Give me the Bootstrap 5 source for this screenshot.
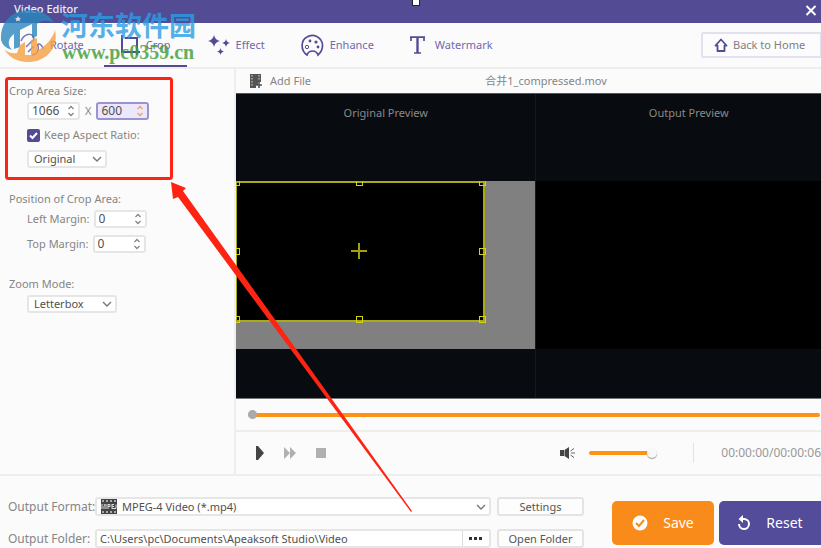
<!DOCTYPE html>
<html lang="en">
<head>
<meta charset="utf-8">
<meta name="viewport" content="width=device-width, initial-scale=1">
<title>Video Editor</title>
<link href="https://cdn.jsdelivr.net/npm/bootstrap@5.3.0/dist/css/bootstrap.min.css" rel="stylesheet">
<style>
  body { font-family: "Noto Sans", "Noto Sans CJK SC", sans-serif; font-size: 11px; line-height: 16px; color: #858585; background: #fbfbfb; overflow-x: hidden; }
  svg { display: block; flex: none; }
  .titlebar { background: #534c95; height: 23px; padding: 0 4px 0 14px; }
  .titlebar h1 { font-size: 11px; line-height: 17px; color: #eeedf6; font-weight: 500; }
  .grip { top: 0; left: 412px; width: 8px; height: 6px; background: #fff; border: 1px solid #222; border-top: 0; }
  .toolbar { height: 46px; border-bottom: 2px solid #eee; padding-left: 4px; }
  .tool-tab { color: #7068b0; text-decoration: none; height: 44px; padding: 2px 16px 0; border-bottom: 2px solid transparent; gap: 6px; }
  .tool-tab.current { border-bottom-color: #534c95; }
  .home-btn { width: 121px; height: 26px; margin-right: -1px; border: 2px solid #e3e1ef; border-radius: 2px 0 0 2px; background: #fcfcfc; color: #808080; gap: 5px; padding: 0 0 0 11px; }
  .side { width: 236px; border-right: 2px solid #eee; padding: 14px 8px 0 9px; }
  .side .group { margin-bottom: 23px; }
  .side .inner { margin: 3px 0 0 18px; }
  .side .inner + .inner { margin-top: 7px; }
  .times { padding: 0 5px; }
  .field { height: 18px; border: 2px solid #e6e6e6; border-radius: 3px; background: #fff; position: relative; display: inline-flex; align-items: center; }
  .field input, .field select { appearance: none; -moz-appearance: textfield; border: 0; outline: 0; background: transparent; color: #505050; width: 100%; padding: 0 0 0 3px; font-size: 11px; line-height: 14px; height: 14px; }
  .field input[type=number] { font-size: 12px; }
  .field input::-webkit-inner-spin-button { appearance: none; }
  .field > svg { position: absolute; right: 3px; pointer-events: none; }
  .field.active-field { background: #ebe8fd; border-color: #9a93cd; color: #f0a25c; }
  .w-spin { width: 53px; }
  .w-ratio { width: 80px; }
  .w-zoom { width: 90px; }
  .field select { padding-left: 5px; }
  .keep { width: 13px; height: 13px; appearance: none; background: #534c95; border-radius: 2px; margin: 0; }
  .filebar { height: 24px; padding: 0 40px 0 14px; }
  .filebar button, .plain { border: 0; background: none; padding: 0; color: inherit; }
  .previews { display: grid; grid-template-columns: 300fr 286fr; background: #080b10; color: #8a8a8a; border-top: 1px solid #555; border-bottom: 1px solid #777; height: 306px; }
  .pane { display: grid; grid-template-rows: 87px 168px 1fr; }
  .pane + .pane { border-left: 1px solid #15181d; }
  .pane-title { padding-top: 11px; text-align: center; }
  .pane + .pane .pane-title { padding-left: 20px; }
  .stage { background: #808080; position: relative; overflow: hidden; }
  .stage.blank { background: #000; }
  .crop-box { position: absolute; left: 0; top: 0; width: 83%; height: 84%; background: #000; border: 2px solid #aaaa14; border-left-width: 1px; }
  .handle { position: absolute; width: 7px; height: 7px; margin: -3px; border: 1px solid #d2d21b; transform: translate(-1px, -1px); }
  .cross { position: absolute; left: 50%; top: 50%; margin: -9px; }
  .seek-row { height: 33px; padding: 1px 1px 0 12px; border-bottom: 2px solid #eee; }
  input[type=range] { appearance: none; background: transparent; margin: 0; display: block; }
  input[type=range]::-webkit-slider-runnable-track { height: 4px; background: #fd9213; border-radius: 2px; }
  .seek { width: 100%; height: 10px; }
  .seek::-webkit-slider-thumb { appearance: none; width: 9px; height: 9px; margin-top: -3px; border-radius: 50%; background: #aaa; }
  .volume { width: 68px; height: 12px; }
  .volume::-webkit-slider-thumb { appearance: none; width: 10px; height: 10px; margin-top: -3px; border-radius: 50%; background: #f8f8f8; box-shadow: 0 1px 1px #999; }
  .mute { margin-right: 14px; }
  .controls { height: 42px; padding: 0 0 0 20px; }
  .divider { width: 1px; height: 20px; background: #e2e2e2; margin: 0 27px 0 36px; }
  .time { font-size: 12px; color: #999; }
  .output { border-top: 2px solid #eee; padding: 21px 0 0 8px; gap: 28px; }
  .output-form { display: grid; grid-template-columns: 81px 1fr 87px; gap: 13px 6px; align-items: center; }
  .output-form > label { text-align: right; white-space: nowrap; font-size: 12px; }
  .small-btn { height: 19px; line-height: 14px; border: 2px solid #e4e4e4; border-radius: 3px; background: #fdfdfd; color: #555; padding: 0; }
  .output .field { height: 19px; }
  .dots { width: 29px; height: 15px; border-left: 1px solid #ddd !important; }
  .output-actions { gap: 5px; padding-top: 4px; }
  .big-btn { width: 102px; height: 44px; border: 0; border-radius: 5px; color: #fff; font-size: 14px; gap: 15px; padding: 0; }
  .save { background: #f98b1b; }
  .reset { background: #534c9b; border-radius: 5px 0 0 5px; }
  .brand-mark { position: absolute; left: 0; top: 10px; opacity: .8; pointer-events: none; }
  .brand-name { position: absolute; left: 61px; top: 8px; font: 700 27px/34px "Noto Sans CJK SC", sans-serif; color: #2d9de5; opacity: .8; white-space: nowrap; pointer-events: none; }
  .brand-url { position: absolute; left: 62px; top: 41px; font: 700 20px/22px "Liberation Serif", serif; color: #3c9c35; opacity: .8; pointer-events: none; }
  .annotation { position: absolute; left: 0; top: 0; pointer-events: none; }
</style>
<script src="https://cdn.jsdelivr.net/npm/bootstrap@5.3.0/dist/js/bootstrap.bundle.min.js"></script>
</head>
<body class="position-relative d-flex flex-column min-vh-100">
<svg class="d-none" aria-hidden="true">
  <symbol id="spin" viewBox="0 0 8 12"><path d="M1.500 4 4 1.500 6.500 4M1.500 8 4 10.500 6.500 8" fill="none" stroke="currentColor" stroke-width="1.300"/></symbol>
  <symbol id="chev" viewBox="0 0 10 8"><path d="M1 2l4 4 4-4" fill="none" stroke="#777" stroke-width="1.400"/></symbol>
</svg>

<header class="titlebar d-flex align-items-start justify-content-between">
  <h1 class="m-0">Video Editor</h1>
  <button class="plain pt-1" aria-label="Close"><svg width="12" height="12" viewBox="0 0 12 12"><path d="M1.500 2l9 9M10.500 2l-9 9" stroke="#fff" stroke-width="2"/></svg></button>
  <span class="grip position-absolute"></span>
</header>

<nav class="toolbar d-flex align-items-center justify-content-between">
  <div class="d-flex gap-1">
    <a href="#" class="tool-tab d-flex align-items-center"><svg width="24" height="24" viewBox="0 0 24 24" fill="none" stroke="#534c95" stroke-opacity=".75" stroke-width="1.500"><path d="M1 8C4 1 10 0 13 3 15 6 13 8 11 9L6 14M8 19l6-6M12 22C17 22 19 17 18 13 17 11 19 10 21 12l3 4"/></svg>Rotate</a>
    <a href="#" class="tool-tab current d-flex align-items-center"><svg width="20" height="20" viewBox="0 0 20 20" fill="none" stroke="#534c95" stroke-width="2"><path d="M2 0v17h18M5 3h12v17"/></svg>Crop</a>
    <a href="#" class="tool-tab d-flex align-items-center"><svg width="23" height="22" viewBox="0 0 23 22" fill="#534c95"><path d="M7 1q1 5 6 6-5 1-6 6-1-5-6-6 5-1 6-6zM19 5q.6 3.400 4 4-3.400.6-4 4-.6-3.400-4-4 3.400-.6 4-4zM13.500 14q.5 3 3.500 3.500-3 .5-3.500 3.500-.5-3-3.500-3.500 3-.5 3.500-3.500z"/></svg>Effect</a>
    <a href="#" class="tool-tab d-flex align-items-center"><svg width="23" height="23" viewBox="0 0 23 23" fill="none" stroke="#534c95" stroke-width="1.700"><path d="M6 21C-1 16 0 6 6 3c6-4 15 0 15.500 8 .2 5-2 8-4.500 10-1-3-2.500-4-5.500-4S7 18 6 21z"/><circle cx="6" cy="13" r="1.700" stroke-width="1"/><g fill="#534c95" stroke="none"><circle cx="9" cy="7" r="1.400"/><circle cx="15" cy="8" r="1.600"/><circle cx="17" cy="13" r="1.400"/></g></svg>Enhance</a>
    <a href="#" class="tool-tab d-flex align-items-center"><svg class="me-1" width="15" height="18" viewBox="0 0 15 18" fill="none" stroke="#534c95"><path d="M7.500 1v16" stroke-width="2.400"/><path d="M0 1.200h15M1 1v4M14 1v4M4 17h7" stroke-width="1.700"/></svg>Watermark</a>
  </div>
  <button class="home-btn d-flex align-items-center"><svg width="14" height="15" viewBox="0 0 14 15"><path d="M7 1.500 1.500 7.500H3.500v5.500h7V7.500h2z" fill="none" stroke="#534c95" stroke-width="1.800" stroke-linejoin="round"/></svg>Back to Home</button>
</nav>

<div class="d-flex flex-grow-1">
  <aside class="side flex-shrink-0">
    <div class="group">
      <div>Crop Area Size:</div>
      <div class="inner d-flex align-items-center">
        <span class="field w-spin"><input type="number" value="1066" aria-label="Crop width"><svg width="8" height="12"><use href="#spin"/></svg></span>
        <span class="times">X</span>
        <span class="field w-spin active-field"><input type="number" value="600" aria-label="Crop height"><svg width="8" height="12"><use href="#spin"/></svg></span>
      </div>
      <div class="inner d-flex align-items-center">
        <span class="position-relative d-flex"><input class="keep" type="checkbox" id="keep" checked><svg class="position-absolute top-0 start-0 pe-none" width="13" height="13" viewBox="0 0 13 13"><path d="M3 6.500 5.500 9 10 4" fill="none" stroke="#fff" stroke-width="2"/></svg></span>
        <label for="keep" class="ms-1">Keep Aspect Ratio:</label>
      </div>
      <div class="inner d-flex"><span class="field w-ratio"><select aria-label="Aspect ratio"><option>Original</option></select><svg width="10" height="8"><use href="#chev"/></svg></span></div>
    </div>
    <div class="group">
      <div>Position of Crop Area:</div>
      <div class="inner d-flex align-items-center gap-1"><label for="lm">Left Margin:</label><span class="field w-spin"><input id="lm" type="number" value="0"><svg width="8" height="12"><use href="#spin"/></svg></span></div>
      <div class="inner d-flex align-items-center gap-1"><label for="tm">Top Margin:</label><span class="field w-spin"><input id="tm" type="number" value="0"><svg width="8" height="12"><use href="#spin"/></svg></span></div>
    </div>
    <div>
      <label for="zm" class="d-block">Zoom Mode:</label>
      <div class="inner d-flex"><span class="field w-zoom"><select id="zm"><option>Letterbox</option></select><svg width="10" height="8"><use href="#chev"/></svg></span></div>
    </div>
  </aside>

  <main class="flex-grow-1">
    <div class="filebar d-flex align-items-center">
      <button class="d-flex align-items-center gap-2"><svg width="12" height="15" viewBox="0 0 12 15"><path d="M0 0h11v8H8v3H6v3H0z" fill="#555"/><path d="M2 1v12M9 1v6" stroke="#ddd" stroke-dasharray="1.500 1.500"/><path d="M9 8v6M6 11h6" stroke="#555" stroke-width="1.600"/></svg>Add File</button>
      <span class="mx-auto">合并1_compressed.mov</span>
    </div>
    <div class="previews">
      <section class="pane">
        <div class="pane-title">Original Preview</div>
        <div class="stage">
          <div class="crop-box">
            <i class="handle top-0 start-0"></i><i class="handle top-0 start-50"></i><i class="handle top-0 start-100"></i>
            <i class="handle top-50 start-0"></i><i class="handle top-50 start-100"></i>
            <i class="handle top-100 start-0"></i><i class="handle top-100 start-50"></i><i class="handle top-100 start-100"></i>
            <svg class="cross" width="16" height="16"><path d="M8 0v16M0 8h16" stroke="#a0a010" stroke-width="2"/></svg>
          </div>
        </div>
      </section>
      <section class="pane"><div class="pane-title">Output Preview</div><div class="stage blank"></div></section>
    </div>
    <div class="seek-row d-flex align-items-center"><input class="seek" type="range" value="0" aria-label="Seek"></div>
    <div class="controls d-flex align-items-center">
      <button class="plain" aria-label="Play"><svg width="8" height="14"><path d="M0 0h2l6 7-6 7H0z" fill="#444"/></svg></button>
      <button class="plain ms-3 ps-1" aria-label="Fast forward"><svg width="12" height="12"><path d="M0 0l6 6-6 6zM6 0l6 6-6 6z" fill="#b0b0b0"/></svg></button>
      <button class="plain ms-3 ps-1" aria-label="Stop"><svg width="10" height="10"><path d="M0 0h10v10H0z" fill="#b0b0b0"/></svg></button>
      <button class="plain mute ms-auto" aria-label="Mute"><svg width="15" height="12" viewBox="0 0 15 12"><path d="M0 3h4v6H0zM4.500 3 9 0v12L4.500 9z" fill="#444"/><path d="M10.500 4 14 1.500M11 6h4M10.500 8l3.500 2.500" stroke="#666"/></svg></button>
      <input class="volume" type="range" value="100" aria-label="Volume">
      <span class="divider"></span>
      <span class="time">00:00:00/00:00:06</span>
    </div>
  </main>
</div>

<footer class="output d-flex">
  <div class="output-form flex-grow-1">
    <label for="fmt">Output Format:</label>
    <span class="field"><svg class="position-static ms-1" width="16" height="15" viewBox="0 0 16 15"><path d="M0 0h16v15H0z" fill="#444"/><path d="M1 2h14M1 13h14" stroke="#ccc" stroke-width="1.500" stroke-dasharray="2 2"/><path d="M1 5v5M3 7v3M3 5l1 2M5 5v5M7 5v5M7 5.500h2v2H7M11 5v5M11 5.500h2M11 7.500h2M11 9.500h4v-4" fill="none" stroke="#ddd"/></svg><select id="fmt"><option>MPEG-4 Video (*.mp4)</option></select><svg width="10" height="8"><use href="#chev"/></svg></span>
    <button class="small-btn">Settings</button>
    <label for="folder">Output Folder:</label>
    <span class="field"><input id="folder" type="text" value="C:\Users\pc\Documents\Apeaksoft Studio\Video"><button class="plain dots" aria-label="Browse"><svg class="mx-auto" width="13" height="4"><path d="M0 0h3v3H0zM5 0h3v3H5zM10 0h3v3h-3z" fill="#333"/></svg></button></span>
    <button class="small-btn">Open Folder</button>
  </div>
  <div class="output-actions d-flex flex-shrink-0">
    <button class="big-btn save d-flex align-items-center justify-content-center"><svg width="16" height="16" viewBox="0 0 16 16"><circle cx="8" cy="8" r="7.500" fill="#fff"/><path d="M4 8l3 3 5-6" fill="none" stroke="#f98b1b" stroke-width="2"/></svg>Save</button>
    <button class="big-btn reset d-flex align-items-center justify-content-center"><svg width="14" height="16" viewBox="0 0 14 16"><path d="M5 4h2.500a5 5 0 1 1-5.500 5" fill="none" stroke="#fff" stroke-width="2"/><path d="M6 0v8L1.500 4z" fill="#fff"/></svg>Reset</button>
  </div>
</footer>

<svg class="brand-mark" width="57" height="53" viewBox="0 0 57 53">
  <path d="M1 26C2 8 16 0 30 0c12 0 20 6 24 13-8-4-14-2-17 1v12l-5 2V14L20 20v17l-6 2V24C8 28 7 35 12 40 5 38 0 33 1 26z" fill="#2b87bd"/>
  <path d="M55 20c4 18-9 32-27 32C16 52 8 46 4 39c4 4 9 5 13 4l3-8 5-3v13h6V30l6-2v13c9-5 16-13 18-21z" fill="#f5a042"/>
  <path d="M18 6l1 2 2 .2-1.500 1.400.4 2L18 10.500l-2 1.100.4-2L15 8.200l2-.2z" fill="#fff"/>
</svg>
<div class="brand-name" lang="zh">河东软件园</div>
<div class="brand-url">www.pc0359.cn</div>
<svg class="annotation" width="420" height="520" viewBox="0 0 420 520">
  <rect x="6.500" y="78.500" width="165" height="100" rx="2" fill="none" stroke="#fe2414" stroke-width="3"/>
  <path d="M171 182l15 6-3 3 229 320-1 1L178 197l-5 2z" fill="#fe2414"/>
</svg>
</body>
</html>
